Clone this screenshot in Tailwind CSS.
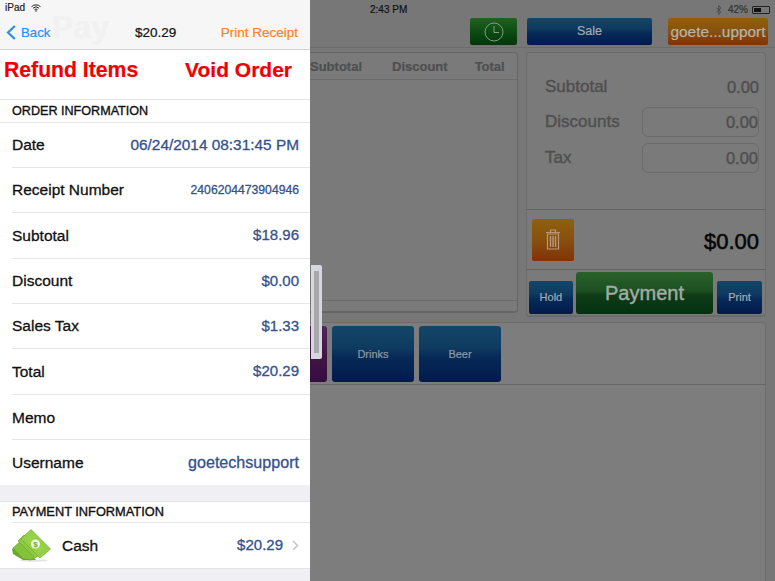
<!DOCTYPE html>
<html lang="en">
<head>
  <meta charset="UTF-8" />
  <title>Order Detail</title>
  <script src="https://cdn.jsdelivr.net/npm/@tailwindcss/browser@4"></script>
</head>
<body class="w-[775px] h-[581px] overflow-hidden font-['Liberation_Sans',sans-serif] [-webkit-text-stroke:0.2px]">
<div class="relative flex w-[775px] h-[581px] overflow-hidden">

  <!-- Left slide-over -->
  <div class="w-[310px] shrink-0 bg-[#efeff4] flex flex-col">
    <div class="relative h-[50px] bg-[#f6f6f6] border-b border-[#d4d4d6] flex flex-col overflow-hidden">
      <span class="absolute left-[52px] top-[8px] text-[32px] leading-[38px] font-bold text-[#f1f1f1]">Pay</span>
      <div class="relative h-[15px] flex items-center gap-[6px] pl-[5px] text-[10px] text-[#222]">
        <span>iPad</span>
        <svg class="w-[10px] h-[8px]" viewBox="0 0 10 8"><path d="M0.5 2.7a6.4 6.4 0 0 1 9 0M2 4.2a4.3 4.3 0 0 1 6 0M3.5 5.7a2.1 2.1 0 0 1 3 0" fill="none" stroke="#222" stroke-width="1"/><circle cx="5" cy="7" r="0.8" fill="#222"/></svg>
      </div>
      <div class="relative flex-1 flex items-center justify-between pl-[6px] pr-[12px] pt-[2px] text-[13.5px]">
        <div class="flex items-center gap-[5px] text-[#2c8cf4]">
          <svg class="w-[10px] h-[15px]" viewBox="0 0 10 15"><path d="M8.8 1L2 7.5 8.8 14" fill="none" stroke="#2c8cf4" stroke-width="2.2"/></svg>
          <span class="text-[13.2px]">Back</span>
        </div>
        <span class="absolute left-[135px] text-[#111]">$20.29</span>
        <span class="text-[#f5822a]">Print Receipt</span>
      </div>
    </div>

    <div class="h-[50px] bg-white border-b border-[#e4e4e6] flex items-center justify-between pl-[4px] pr-[18px] pb-[10px] text-[21.2px] font-bold text-[#f00000]">
      <span>Refund Items</span>
      <span class="text-[21px]">Void Order</span>
    </div>

    <div class="bg-white">
      <div class="h-[22px] pl-[12px] pt-[1px] flex items-center text-[12.6px] text-[#111] [-webkit-text-stroke:0.35px]">ORDER INFORMATION</div>
      <div class="pl-[12px] border-t border-[#e6e6e8] text-[15.5px] [-webkit-text-stroke:0.3px]">
        <div class="h-[45px] flex items-center justify-between pr-[11px] border-b border-[#e6e6e8]"><span class="text-[#111]">Date</span><span class="text-[#34528c] text-[15.4px]">06/24/2014 08:31:45 PM</span></div>
        <div class="h-[45px] flex items-center justify-between pr-[11px] border-b border-[#e6e6e8]"><span class="text-[#111]">Receipt Number</span><span class="text-[#34528c] text-[12.2px]">2406204473904946</span></div>
        <div class="h-[46px] flex items-center justify-between pr-[11px] border-b border-[#e6e6e8]"><span class="text-[#111]">Subtotal</span><span class="text-[#34528c] text-[15px]">$18.96</span></div>
        <div class="h-[45px] flex items-center justify-between pr-[11px] border-b border-[#e6e6e8]"><span class="text-[#111]">Discount</span><span class="text-[#34528c] text-[15px]">$0.00</span></div>
        <div class="h-[45px] flex items-center justify-between pr-[11px] border-b border-[#e6e6e8]"><span class="text-[#111]">Sales Tax</span><span class="text-[#34528c] text-[15px]">$1.33</span></div>
        <div class="h-[46px] flex items-center justify-between pr-[11px] border-b border-[#e6e6e8]"><span class="text-[#111]">Total</span><span class="text-[#34528c] text-[15px]">$20.29</span></div>
        <div class="h-[45px] pt-[1px] flex items-center justify-between pr-[11px] border-b border-[#e6e6e8]"><span class="text-[#111]">Memo</span></div>
        <div class="h-[45px] flex items-center justify-between pr-[11px]"><span class="text-[#111]">Username</span><span class="text-[#34528c] text-[16.1px]">goetechsupport</span></div>
      </div>
    </div>

    <div class="mt-[16px] bg-white border-y border-[#e4e4e6]">
      <div class="h-[20px] pl-[12px] flex items-center text-[12.8px] text-[#111] [-webkit-text-stroke:0.35px]">PAYMENT INFORMATION</div>
      <div class="ml-[12px] h-[46px] border-t border-[#e6e6e8] flex items-center pr-[11px] text-[15.5px] [-webkit-text-stroke:0.3px]">
        <svg class="w-[39px] h-[33px] shrink-0" viewBox="0 0 39 33">
          <ellipse cx="22" cy="31.5" rx="14" ry="1.2" fill="#e2e2e2"/>
          <path d="M0 20L1 25 11 31 24 31 8 15Z" fill="#6aa92a"/>
          <path d="M1 19L10 11 25 27 19 31 11 30Z" fill="#84c23c" stroke="#659f28" stroke-width="0.7"/>
          <path d="M6 12L12 6 30 24 23 29Z" fill="#8ccb40" stroke="#6aa92a" stroke-width="0.7"/>
          <path d="M9 10L19 0.6 38.5 20 28 29Z" fill="#97d24a" stroke="#73b02f" stroke-width="0.8"/>
          <path d="M12 10.5L19 3.5 35 19.5 28 26Z" fill="none" stroke="#7dbb35" stroke-width="0.7" stroke-dasharray="1.5 2"/>
          <circle cx="23.5" cy="15" r="4.6" fill="#eef8dc"/>
          <text x="23.5" y="18" text-anchor="middle" font-size="8" font-weight="700" fill="#6aa92a" style="-webkit-text-stroke:0">$</text>
        </svg>
        <span class="ml-[11px] text-[#111]">Cash</span>
        <span class="ml-auto text-[#34528c] text-[15px]">$20.29</span>
        <svg class="ml-[9px] w-[7px] h-[11px]" viewBox="0 0 7 11"><path d="M1 1l4.5 4.5L1 10" fill="none" stroke="#c4c4c8" stroke-width="1.5"/></svg>
      </div>
    </div>
  </div>

  <!-- Dimmed register behind -->
  <div class="flex-1 bg-[#777777] flex flex-col">
    <div class="h-[15px] relative text-[10px] text-[#111]">
      <span class="absolute left-[60px] top-[2px]">2:43 PM</span>
      <div class="absolute right-[5px] top-[2px] flex items-center gap-[3px]">
        <svg class="w-[6px] h-[10px] mr-[3px]" viewBox="0 0 6 10"><path d="M0.5 2.8l4.5 4.4-2.2 2.2V0.6l2.2 2.2L0.5 7.2" fill="none" stroke="#444" stroke-width="0.9"/></svg>
        <span class="text-[#333]">42%</span>
        <div class="w-[18px] h-[8px] border border-[#222] rounded-[1px] ml-[1px] p-[1px]"><div class="w-[7px] h-full bg-[#111]"></div></div>
      </div>
    </div>

    <div class="h-[33px] flex items-start pt-[3px] border-b border-[#6c6c6c] shrink-0">
      <div class="ml-[160px] w-[47px] h-[27px] rounded-[2px] bg-[linear-gradient(#1f6320,#0d4c13_50%,#043509)] flex items-center justify-center">
        <svg class="w-[20px] h-[20px]" viewBox="0 0 20 20"><circle cx="10" cy="10" r="9" fill="none" stroke="#7f9f7f" stroke-width="1"/><path d="M10 4v6.5h5" fill="none" stroke="#7f9f7f" stroke-width="1"/></svg>
      </div>
      <div class="ml-[10px] w-[125px] h-[27px] rounded-[2px] bg-[linear-gradient(#144668,#0e3a60_40%,#072a58_55%,#011a4c)] flex items-center justify-center text-[12.5px] text-[#a4abb2]">Sale</div>
      <div class="ml-[16px] w-[100px] h-[27px] rounded-[2px] bg-[linear-gradient(#90600f,#87500e_50%,#823207)] flex items-center justify-center text-[15.4px] text-[#b8b4ac] whitespace-nowrap">goete...upport</div>
    </div>

    <div class="flex pt-[4px] h-[274px] shrink-0">
      <!-- Order lines -->
      <div class="w-[208px] h-[261px] border-r border-b-2 border-t border-[#666666] rounded-br-[4px] rounded-tr-[4px] flex flex-col bg-[#7a7a7a]">
        <div class="h-[27px] pt-[1px] border-b border-[#6a6a6a] flex items-center text-[13px] font-bold text-[#4f4f4f]">
          <span class="w-[53px]">Subtotal</span>
          <span class="ml-[29px]">Discount</span>
          <span class="ml-[27px]">Total</span>
        </div>
        <div class="flex-1"></div>
        <div class="h-[11px] border-t border-[#6c6c6c]"></div>
      </div>

      <!-- Totals -->
      <div class="ml-[8px] w-[240px] h-[265px] border border-[#6c6c6c] border-b-2 rounded-[4px] flex flex-col bg-[#7a7a7a]">
        <div class="h-[157px] pt-[17px] pl-[18px] pr-[6px] border-b border-[#626262] text-[17px] text-[#4f4f4f] [-webkit-text-stroke:0.4px] shrink-0">
          <div class="h-[34px] flex items-center justify-between"><span>Subtotal</span><span class="text-[16.5px]">0.00</span></div>
          <div class="h-[36px] flex items-center justify-between"><span>Discounts</span><span class="w-[117px] h-[30px] border border-[#6a6a6a] rounded-[6px] flex items-center justify-end text-[16.5px]">0.00</span></div>
          <div class="h-[36px] flex items-center justify-between"><span>Tax</span><span class="w-[117px] h-[30px] border border-[#6a6a6a] rounded-[6px] flex items-center justify-end text-[16.5px]">0.00</span></div>
        </div>
        <div class="h-[60px] pl-[5px] pr-[6px] border-b border-[#626262] flex items-center justify-between shrink-0">
          <div class="w-[42px] h-[42px] rounded-[2px] bg-[linear-gradient(#90600f,#87500e_50%,#823207)] flex items-center justify-center">
            <svg class="w-[16px] h-[21px]" viewBox="0 0 16 21"><path d="M1 3.5h14M5.5 3V1h5v2M2.5 5h11v15h-11z" fill="none" stroke="#b89878" stroke-width="1.2"/><path d="M5.5 7v11M8 7v11M10.5 7v11" stroke="#b89878" stroke-width="1.4"/></svg>
          </div>
          <span class="mt-[4px] text-[22px] text-[#050505] [-webkit-text-stroke:0.5px]">$0.00</span>
        </div>
        <div class="flex-1 flex items-end gap-[3px] pl-[2px] pr-[3px] pb-[1px]">
          <div class="w-[44px] h-[33px] rounded-[2px] bg-[linear-gradient(#144668,#0e3a60_40%,#072a58_55%,#011a4c)] flex items-center justify-center text-[11px] text-[#a4abb2]">Hold</div>
          <div class="w-[138px] h-[42px] rounded-[3px] bg-[linear-gradient(#2a622a,#1c5022_45%,#0f3c16_55%,#033010)] flex items-center justify-center text-[20px] text-[#a4aca4] [-webkit-text-stroke:0.4px]">Payment</div>
          <div class="ml-[1px] w-[45px] h-[33px] rounded-[2px] bg-[linear-gradient(#144668,#0e3a60_40%,#072a58_55%,#011a4c)] flex items-center justify-center text-[11px] text-[#a4abb2]">Print</div>
        </div>
      </div>
    </div>

    <!-- Category tray -->
    <div class="mr-[9px] flex-1 border-t border-r border-[#6c6c6c] rounded-tr-[4px] bg-[#7d7d7d] flex flex-col">
      <div class="h-[62px] border-b border-[#666666] flex gap-[5px] pt-[3px] shrink-0">
        <div class="w-[17px] h-[56px] rounded-r-[3px] bg-[linear-gradient(#52265a,#3f1643_50%,#360d40)]"></div>
        <div class="w-[82px] h-[56px] rounded-[3px] bg-[linear-gradient(#144668,#0e3a60_40%,#072a58_55%,#011a4c)] flex items-center justify-center text-[11px] text-[#9099a2]">Drinks</div>
        <div class="w-[82px] h-[56px] rounded-[3px] bg-[linear-gradient(#144668,#0e3a60_40%,#072a58_55%,#011a4c)] flex items-center justify-center text-[11px] text-[#9099a2]">Beer</div>
      </div>
    </div>
  </div>

  <!-- Scroll indicator over the seam -->
  <div class="absolute left-[311px] top-[265px] w-[11px] h-[94px] rounded-r-[2px] bg-[#d6d6de] flex justify-center py-[6px]">
    <div class="w-[5px] h-full bg-[#a8a8ac]"></div>
  </div>
</div>
</body>
</html>
